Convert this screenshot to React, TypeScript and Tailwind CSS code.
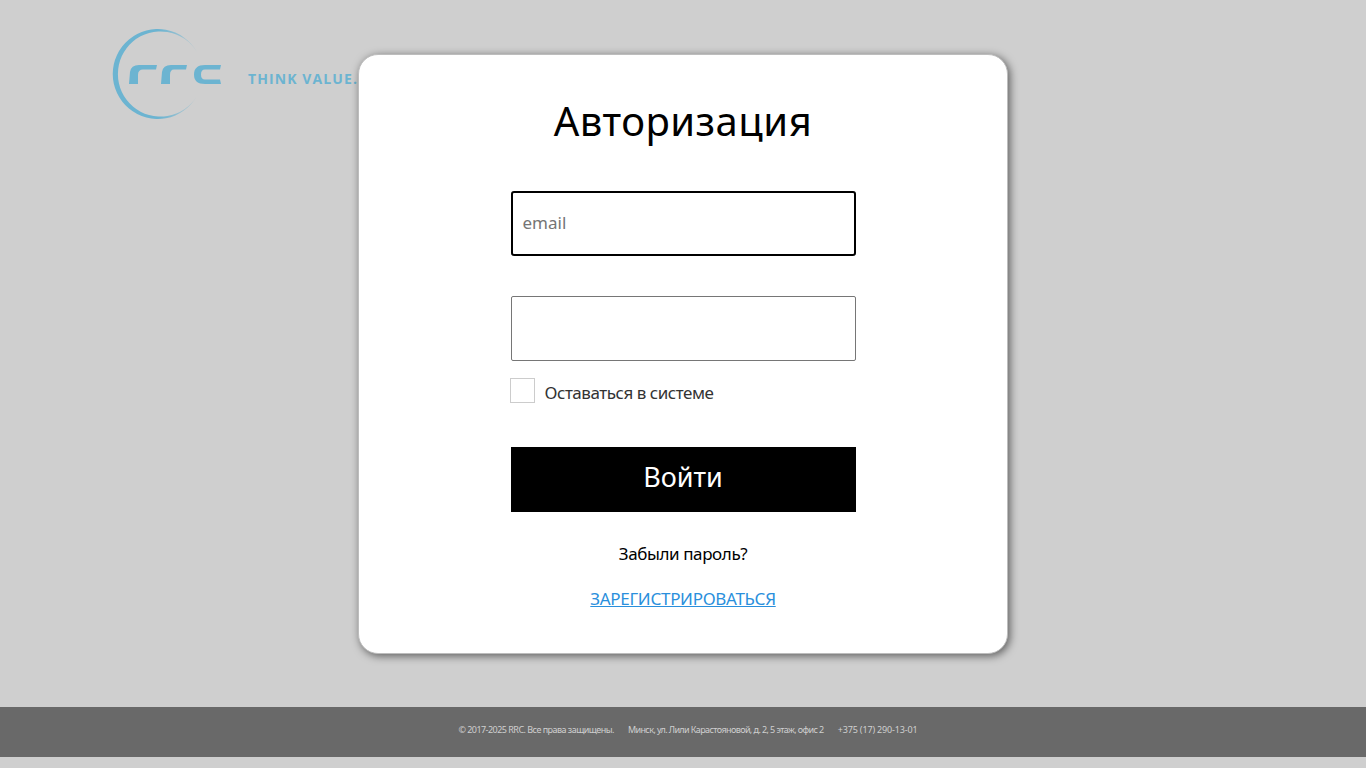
const font = "font-['Noto_Sans','Open_Sans',sans-serif]";

function Logo() {
  return (
    <svg width="250" height="100" viewBox="0 0 250 100" className="absolute left-[110px] top-[25px]">
      <defs>
        <linearGradient id="ring" x1="0" x2="1" y1="0" y2="0">
          <stop offset="0.55" stopColor="#6cb4d1" />
          <stop offset="1" stopColor="#6cb4d1" stopOpacity="0.2" />
        </linearGradient>
      </defs>
      <path d="M87 27 A45 45 0 1 0 87 71 A42.600 42.600 0 1 1 87 27 Z" fill="url(#ring)" />
      <g fill="#6cb4d1">
        <path d="M19 59 L20 47 Q21 40 29 40 H47 L46 44.500 H33 Q28 44.500 28 50 V59 Z" />
        <path d="M51 59 L52 47 Q53 40 61 40 H77 L76 44.500 H64 Q60 44.500 60 50 V59 Z" />
        <path d="M111 40 H95 Q84 40 84 49.500 Q84 59 95 59 H111 L110 54.500 H95 Q91 54.500 91 49.500 Q91 44.500 95 44.500 H110 Z" />
      </g>
      <text x="138" y="58.500" fill="#6cb4d1" fontSize="14" fontWeight="700" letterSpacing="1.100" fontFamily="Open Sans, sans-serif">
        THINK VALUE.
      </text>
    </svg>
  );
}

export default function App() {
  return (
    <div className={`relative min-h-[768px] bg-[#cfcfcf] ${font}`}>
      <Logo />
      <main className="relative mx-auto w-[650px] pt-[54px]">
        <section className="flex h-[600px] flex-col items-center rounded-[20px] border border-[#bdbdbd] bg-white pt-[40px] shadow-[2px_2px_8px_rgba(0,0,0,0.55)]">
          <h1 className="text-[40px] leading-[52px] tracking-[0.5px] text-black">Авторизация</h1>
          <form className="mt-[44px] flex w-[345px] flex-col">
            <div className="flex h-[65px] items-center rounded-[3px] border-2 border-black px-[10px] pb-[1px] text-[17px] text-[#757575]">
              email
            </div>
            <div className="mt-[40px] h-[65px] rounded-[2px] border border-[#767676]" />
            <label className="mt-[17px] flex items-start text-[17px] tracking-[-0.45px] text-[#333333]">
              <span className="ml-[-1px] h-[25px] w-[25px] border border-[#cccccc] bg-white" />
              <span className="ml-[10px] mt-[1px] leading-[28px]">Оставаться в системе</span>
            </label>
            <button type="button" className="mt-[40px] h-[65px] bg-black pb-[5px] text-[27px] text-white">
              Войти
            </button>
          </form>
          <a className="mt-[28px] text-[17px] leading-[28px] tracking-[-0.4px] text-black">Забыли пароль?</a>
          <a className="mt-[17px] text-[17px] leading-[28px] tracking-[-0.3px] text-[#2a8fdc] underline">ЗАРЕГИСТРИРОВАТЬСЯ</a>
        </section>
      </main>
      <footer className="mt-[53px] flex h-[50px] items-center justify-center gap-[14px] bg-[#696969] pb-[5px] pl-[10px] text-[9px] text-[#cfcfcf]">
        <span className="tracking-[-0.53px]">© 2017-2025 RRC. Все права защищены.</span>
        <span className="tracking-[-0.6px]">Минск, ул. Лили Карастояновой, д. 2, 5 этаж, офис 2</span>
        <span className="tracking-[-0.15px]">+375 (17) 290-13-01</span>
      </footer>
    </div>
  );
}
